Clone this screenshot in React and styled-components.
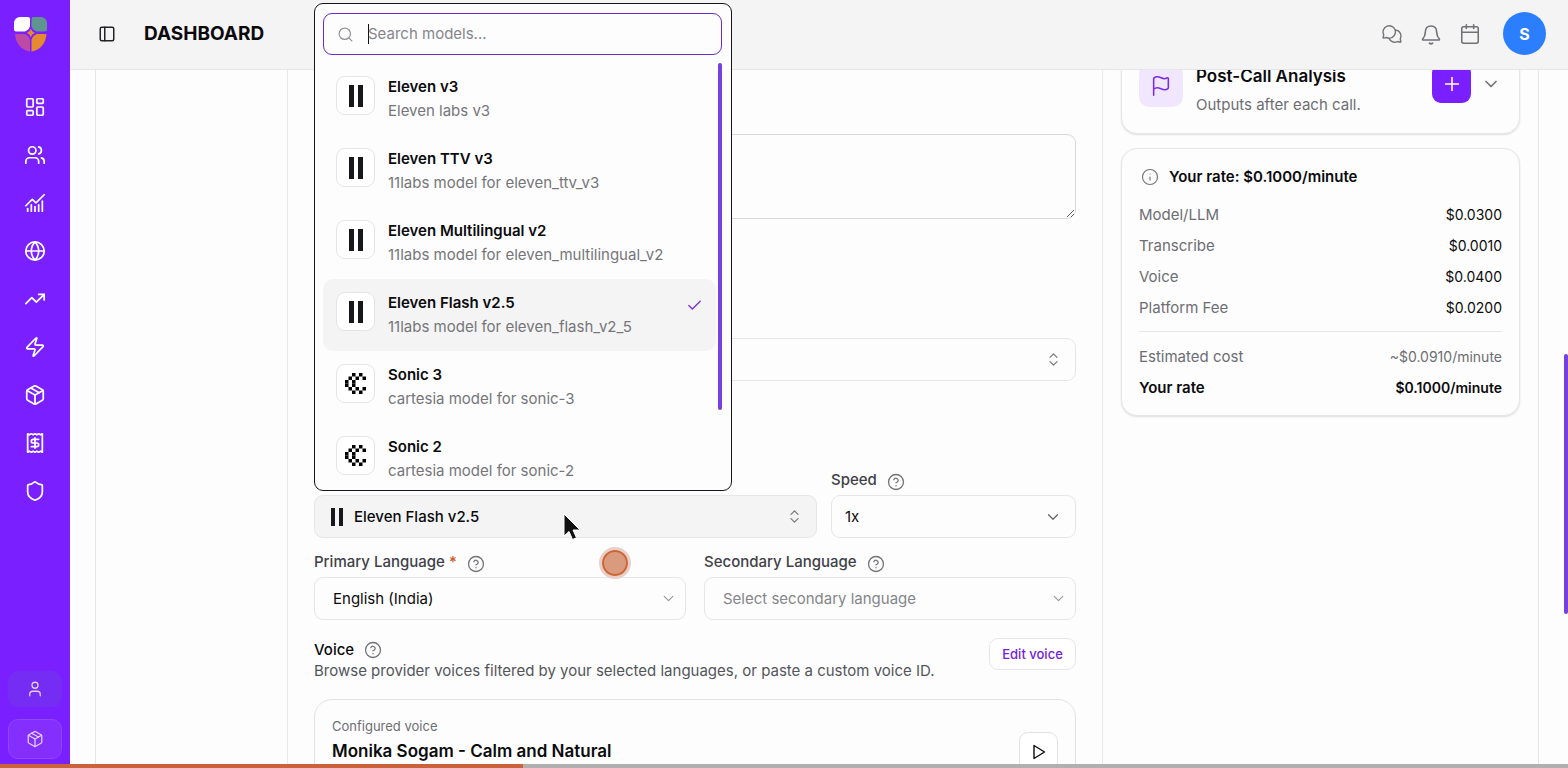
import { useState } from 'react'
import styled, { createGlobalStyle } from 'styled-components'
import {
  Calendar, ChartNoAxesCombined, Check, ChevronDown, ChevronsUpDown, CircleQuestionMark, Flag, Globe, Info,
  LayoutDashboard, Package, PanelLeft, Plus, Receipt, Search, Shield, TrendingUp, User, Users, Zap
} from 'lucide-react'
import { PiChatsCircle } from 'react-icons/pi'

const GlobalStyle = createGlobalStyle`
  * {
    box-sizing: border-box;
  }
  body {
    margin: 0;
    overflow: hidden;
    background: #fdfdfd;
    color: #0b0b0d;
    font: 15px/20px Inter, "Liberation Sans", sans-serif;
  }
  button, input, select, textarea {
    font: inherit;
    color: inherit;
  }
  button {
    padding: 0;
    cursor: pointer;
  }
`

const Shell = styled.div`
  display: flex;
  height: 100vh;
  overflow: hidden;
`

/* ---------- sidebar ---------- */
const Sidebar = styled.aside`
  display: flex;
  flex-direction: column;
  align-items: center;
  width: 70px;
  flex: none;
  padding: 17px 8px 9px;
  background: #7a1fff;
  color: #fff;
`
const LogoLink = styled.a`
  align-self: flex-start;
  height: 35px;
  padding-left: 6px;
  svg {
    display: block;
  }
`
const Nav = styled.nav`
  display: flex;
  flex-direction: column;
  flex: 1;
  margin-top: 31px;
`
const NavLink = styled.a`
  display: flex;
  align-items: center;
  justify-content: center;
  width: 48px;
  height: 48px;
  color: inherit;
`
const SideButton = styled.button`
  display: flex;
  align-items: center;
  justify-content: center;
  width: 54px;
  height: ${p => (p.$outlined ? 40 : 36)}px;
  margin-top: ${p => (p.$outlined ? 12 : 0)}px;
  border: 1px solid ${p => (p.$outlined ? '#9146ff' : 'transparent')};
  border-radius: 10px;
  background: ${p => (p.$outlined ? '#842fff' : '#752cf3')};
  color: #e3d0ff;
`

/* ---------- header ---------- */
const Main = styled.div`
  display: flex;
  flex-direction: column;
  flex: 1;
  min-width: 0;
`
const Header = styled.header`
  position: relative;
  z-index: 1;
  display: flex;
  align-items: center;
  flex: none;
  height: 70px;
  padding: 0 22px 2px 28px;
  border-bottom: 1px solid #e4e6e8;
  background: #f4f4f4;
`
const Title = styled.h1`
  flex: 1;
  margin: 0 0 0 28px;
  font-size: 19px;
  line-height: 28px;
  font-weight: 700;
`
const IconButton = styled.button`
  display: flex;
  align-items: center;
  border: 0;
  background: none;
  color: ${p => p.$color || '#707276'};
`
const Tools = styled.div`
  display: flex;
  align-items: center;
  gap: 17px;
`
const Avatar = styled.button`
  width: 43px;
  height: 43px;
  margin-left: 5px;
  border: 0;
  border-radius: 50%;
  background: #2b7fff;
  color: #fff;
  font-size: 16px;
  font-weight: 700;
`

/* ---------- page ---------- */
const Page = styled.main`
  display: flex;
  flex: 1;
  min-height: 0;
  padding-left: 25px;
`
const Panel = styled.div`
  display: grid;
  grid-template-columns: 191px minmax(0, 816fr) minmax(0, 435fr);
  flex: 1;
  min-width: 0;
  border: solid #e6e6e6;
  border-width: 0 1px;
`
const ScrollTrack = styled.div`
  width: 29px;
  padding: 284px 0 0 25px;
`
const ScrollThumb = styled.div`
  flex: none;
  width: 4px;
  height: ${p => p.$height}px;
  border-radius: 2px;
  background: #7840dc;
`
const Form = styled.form`
  padding: 64px 26px 0;
  border: solid #e9e9e9;
  border-width: 0 1px;
`
const Prompt = styled.textarea`
  display: block;
  width: 100%;
  height: 85px;
  margin-bottom: 119px;
  border: 1px solid #d9d9dc;
  border-radius: 9px;
  background: transparent;
`
const Trigger = styled.button`
  display: flex;
  align-items: center;
  gap: 11px;
  width: 100%;
  height: 43px;
  padding: 0 13px 0 16px;
  border: 1px solid #e6e6e8;
  border-radius: 9px;
  background: ${p => (p.$open ? '#f4f4f4' : '#fdfdfd')};
  font-weight: 500;
  svg:last-child {
    margin-left: auto;
    color: #77787c;
  }
`
const Row = styled.div`
  display: grid;
  grid-template-columns: ${p => p.$columns};
  align-items: end;
  gap: ${p => p.$gap}px;
  margin-top: ${p => p.$top}px;
`
const Anchor = styled.div`
  position: relative;
`
const LabelLine = styled.div`
  display: flex;
  align-items: flex-end;
  gap: 10px;
  height: 21px;
  margin-bottom: 4px;
  color: #3f4148;
  font-weight: 500;
  label {
    line-height: 20px;
    padding-bottom: 1px;
  }
  em {
    color: #d4552a;
    font-style: normal;
  }
`
const SelectBox = styled.div`
  display: grid;
  align-items: center;
  > * {
    grid-area: 1 / 1;
  }
  svg {
    justify-self: end;
    margin-right: ${p => p.$inset}px;
    color: ${p => p.$chevron};
    pointer-events: none;
  }
`
const Select = styled.select`
  appearance: none;
  width: 100%;
  height: 43px;
  padding: 0 ${p => p.$pad}px;
  border: 1px solid #e6e6e8;
  border-radius: 9px;
  background: transparent;
  color: ${p => (p.$muted ? '#85868a' : '#0b0b0d')};
`
const VoiceHead = styled.div`
  display: flex;
  align-items: flex-start;
  justify-content: space-between;
  margin: 18px 0;
`
const VoiceTitle = styled.h2`
  display: flex;
  align-items: center;
  gap: 10px;
  margin: 0;
  font-size: 15px;
  line-height: 23px;
  font-weight: 500;
`
const Description = styled.p`
  margin: 0;
  color: #53555b;
`
const EditButton = styled.button`
  width: 87px;
  height: 32px;
  border: 1px solid #e6e6e8;
  border-radius: 9px;
  background: #fff;
  color: #7422e0;
  font-size: 13px;
  font-weight: 500;
`
const VoiceCard = styled.section`
  display: flex;
  justify-content: space-between;
  padding: 16px 17px;
  border: 1px solid #e2e2e4;
  border-radius: 18px;
  small {
    display: block;
    color: #6d6e73;
    font-size: 13px;
  }
  strong {
    display: block;
    font-size: 17px;
    line-height: 30px;
    font-weight: 600;
  }
`
const PlayButton = styled.button`
  display: grid;
  place-items: center;
  width: 39px;
  height: 39px;
  margin-top: 16px;
  border: 1px solid #e2e2e4;
  border-radius: 9px;
  background: #fff;
`

/* ---------- model popover ---------- */
const Popover = styled.div`
  position: absolute;
  z-index: 2;
  left: 0;
  bottom: calc(100% + 4px);
  width: 418px;
  height: 488px;
  padding: 9px 9px 0 8px;
  overflow: hidden;
  border: 1px solid #15151a;
  border-radius: 9px;
  background: #fdfdfd;
`
const SearchBox = styled.label`
  display: flex;
  align-items: center;
  height: 42px;
  padding: 0 13px;
  border: 1px solid #6a2bc8;
  border-radius: 9px;
  color: #929296;
  input {
    flex: 1;
    min-width: 0;
    padding: 0;
    border: 0;
    outline: 0;
    background: none;
  }
  input::placeholder {
    color: #85868a;
    opacity: 1;
  }
`
const Caret = styled.span`
  width: 1px;
  height: 20px;
  margin: 0 -1px 0 14px;
  background: #111;
`
const ListArea = styled.div`
  display: flex;
  gap: 2px;
  margin-top: 8px;
`
const Options = styled.ul`
  flex: 1;
  margin: 0;
  padding: 0;
  list-style: none;
`
const Option = styled.button`
  display: flex;
  gap: 13px;
  width: 100%;
  height: 72px;
  padding: 13px;
  border: 0;
  border-radius: 10px;
  background: ${p => (p.$selected ? '#f4f4f4' : 'transparent')};
  text-align: left;
  > svg {
    margin: 5px 0 0 auto;
    color: #7a35dd;
  }
`
const OptionIcon = styled.span`
  display: grid;
  place-items: center;
  width: 39px;
  height: 39px;
  border: 1px solid #e4e4e6;
  border-radius: 9px;
  background: #fff;
`
const OptionText = styled.span`
  line-height: 24px;
  margin-top: -1px;
  color: #75767a;
  strong {
    display: block;
    color: #0b0b0d;
    font-weight: 600;
  }
`

/* ---------- right column ---------- */
const Aside = styled.div`
  display: flex;
  flex-direction: column;
  gap: 14px;
  margin-top: -25px;
  padding: 0 18px;
`
const Card = styled.section`
  padding: ${p => p.$padding};
  border: 1px solid #e6e6e8;
  border-radius: 16px;
  background: #fdfdfd;
  box-shadow: 0 1px 2px rgba(0, 0, 0, 0.12);
`
const AnalysisHead = styled.div`
  display: flex;
  align-items: flex-start;
  gap: 13px;
`
const FlagTile = styled.span`
  display: grid;
  place-items: center;
  flex: none;
  width: 44px;
  height: 43px;
  border-radius: 10px;
  background: #f0e7fe;
  color: #7a2be8;
`
const AnalysisText = styled.div`
  flex: 1;
  h2 {
    margin: 0 0 5px;
    font-size: 17px;
    line-height: 24px;
    font-weight: 600;
  }
  p {
    margin: 0;
    line-height: 24px;
    color: #6d6e73;
  }
`
const AnalysisActions = styled.div`
  display: flex;
  align-items: center;
  gap: 10px;
  padding-right: 1px;
`
const AddButton = styled.button`
  display: grid;
  place-items: center;
  width: 39px;
  height: 39px;
  border: 0;
  border-radius: 9px;
  background: #7a1fff;
  color: #fff;
`
const RateTitle = styled.h2`
  display: flex;
  align-items: center;
  gap: 10px;
  margin: 0 0 13px;
  padding-left: 2px;
  font-size: 15px;
  line-height: 20px;
  font-weight: 600;
  svg {
    color: #707276;
  }
`
const RateTable = styled.table`
  width: 100%;
  border-collapse: collapse;
  line-height: 20px;
`
const RateRow = styled.tr`
  border-bottom: ${p => (p.$last ? '1px solid #e6e6e8' : '0')};
  th, td {
    padding: ${p => (p.$first ? 15 : 5)}px 0 ${p => (p.$last ? 13 : 6)}px;
    font-weight: ${p => (p.$bold ? 600 : 400)};
  }
  th {
    text-align: left;
    font-size: 15px;
    color: ${p => (p.$bold ? '#0b0b0d' : '#6d6e73')};
  }
  td {
    text-align: right;
    font-size: 14px;
    color: ${p => (p.$first ? '#6d6e73' : '#0b0b0d')};
  }
`

/* ---------- things that float over the page ---------- */
const Pointer = styled.svg`
  position: fixed;
  z-index: 3;
  left: 563px;
  top: 513px;
`
const ClickDot = styled.div`
  position: fixed;
  z-index: 3;
  left: 599px;
  top: 547px;
  width: 32px;
  height: 32px;
  border: 3px solid #e8cfc8;
  border-radius: 50%;
  background: #d99a7e;
  box-shadow: inset 0 0 0 2px #cf6534;
`
const Progress = styled.div`
  position: fixed;
  z-index: 3;
  left: 0;
  right: 0;
  bottom: 0;
  height: 4px;
  background: #b0b0b0;
  div {
    height: 4px;
    background: #cb623b;
  }
`

const Logo = () => (
  <svg width="34" height="35" viewBox="0 0 34 35">
    <path d="M6 0h8a2 2 0 0 1 2 2v7q-1 4-5 5.500H2a2 2 0 0 1-2-2V6a6 6 0 0 1 6-6z" fill="#fff" />
    <path d="M19.500 0H27a6 6 0 0 1 6 6v6.500a2 2 0 0 1-2 2h-8.500Q18.500 13 17.500 9V2a2 2 0 0 1 2-2z" fill="#5f9490" />
    <path d="M1 17h9.500q4.500 1.500 5.500 6v11.500C7.500 33.500 1.500 26 1 17z" fill="#bd4ba6" />
    <path d="M32.500 17H23q-4.500 1.500-5.500 6v11.500C26 33.500 32 26 32.500 17z" fill="#e58a2e" />
    <path d="M16.800 11.800q.9 3.200 4 4.200-3.100 1-4 4.200-.9-3.200-4-4.200 3.100-1 4-4.200z" fill="#e58a2e" />
  </svg>
)

const Bell = () => (
  <svg width="22" height="22" viewBox="0 0 22 22" fill="none" stroke="currentColor" strokeWidth="1.600" strokeLinecap="round" strokeLinejoin="round">
    <path d="M11 3c-3.600 0-5.600 2.600-5.700 6.200-.1 4-1.300 5.300-2.500 6.500-.5.600-.2 1.300.6 1.300h15.200c.8 0 1.100-.7.600-1.300-1.200-1.200-2.400-2.500-2.500-6.500C16.600 5.600 14.600 3 11 3z" />
    <path d="M9.500 20.300q1.500 1 3 0" strokeWidth="1.800" />
  </svg>
)

const Bars = ({ width, height }) => (
  <svg width={width} height={height} viewBox={`0 0 ${width} ${height}`} fill="#17181c">
    <rect width={width / 2 - 2} height={height} />
    <rect x={width / 2 + 2} width={width / 2 - 2} height={height} />
  </svg>
)

const PIXELS = [
  '..X.X.',
  '.X.X.X',
  'X.X...',
  'X.X...',
  '.X.X.X',
  '..X.X.'
]

const Cartesia = () => (
  <svg width="21" height="21" viewBox="0 0 6 6">
    {PIXELS.map((line, y) => [...line].map((c, x) => (
      c === 'X' && <rect key={`${x}-${y}`} x={x} y={y} width="1" height="1" />
    )))}
  </svg>
)

const PlayIcon = () => (
  <svg width="14" height="16" viewBox="0 0 14 16" fill="none" stroke="currentColor" strokeWidth="1.400" strokeLinejoin="round">
    <path d="M2 1.500v13L12.500 8z" />
  </svg>
)

const Help = ({ about }) => (
  <IconButton type="button" aria-label={`Help: ${about}`}>
    <CircleQuestionMark size={18} strokeWidth={1.7} />
  </IconButton>
)

const links = [
  ['Dashboard', LayoutDashboard],
  ['Contacts', Users],
  ['Analytics', ChartNoAxesCombined],
  ['Web', Globe],
  ['Trends', TrendingUp],
  ['Automations', Zap],
  ['Products', Package],
  ['Billing', Receipt],
  ['Security', Shield]
]

const models = [
  { name: 'Eleven v3', description: 'Eleven labs v3' },
  { name: 'Eleven TTV v3', description: '11labs model for eleven_ttv_v3' },
  { name: 'Eleven Multilingual v2', description: '11labs model for eleven_multilingual_v2' },
  { name: 'Eleven Flash v2.5', description: '11labs model for eleven_flash_v2_5' },
  { name: 'Sonic 3', description: 'cartesia model for sonic-3', cartesia: true },
  { name: 'Sonic 2', description: 'cartesia model for sonic-2', cartesia: true }
]

const ModelPicker = () => {
  const [open, setOpen] = useState(true)
  const [selected, setSelected] = useState('Eleven Flash v2.5')
  const [query, setQuery] = useState('')

  const onSelect = (name) => {
    setSelected(name)
    setOpen(false)
  }

  const rows = models.filter(m => m.name.toLowerCase().includes(query.toLowerCase())).map(m => (
    <li key={m.name}>
      <Option type="button" $selected={m.name === selected} onClick={() => onSelect(m.name)}>
        <OptionIcon>{m.cartesia ? <Cartesia /> : <Bars width={14} height={22} />}</OptionIcon>
        <OptionText><strong>{m.name}</strong>{m.description}</OptionText>
        {m.name === selected && <Check size={17} />}
      </Option>
    </li>
  ))

  return (
    <Anchor>
      {open && (
        <Popover>
          <SearchBox>
            <Search size={17} strokeWidth={1.7} />
            <Caret />
            <input
              aria-label="Search models"
              placeholder="Search models..."
              value={query}
              onChange={e => setQuery(e.target.value)}
            />
          </SearchBox>
          <ListArea>
            <Options>{rows}</Options>
            <ScrollThumb $height={347} />
          </ListArea>
        </Popover>
      )}
      <Trigger type="button" $open={open} aria-expanded={open} onClick={() => setOpen(!open)}>
        <Bars width={12} height={18} />
        {selected}
        <ChevronsUpDown size={17} strokeWidth={1.7} />
      </Trigger>
    </Anchor>
  )
}

const VoiceForm = () => (
  <Form onSubmit={e => e.preventDefault()}>
    <Prompt aria-label="Prompt" />
    <Trigger type="button" aria-label="Choose model">
      <ChevronsUpDown size={17} strokeWidth={1.7} />
    </Trigger>
    <Row $columns="minmax(0, 1fr) 245px" $gap={14} $top={89}>
      <ModelPicker />
      <div>
        <LabelLine>
          <label htmlFor="speed">Speed</label>
          <Help about="speed" />
        </LabelLine>
        <SelectBox $inset={14} $chevron="#66676b">
          <Select id="speed" $pad={13}>
            <option>1x</option>
          </Select>
          <ChevronDown size={18} strokeWidth={1.7} />
        </SelectBox>
      </div>
    </Row>
    <Row $columns="repeat(2, minmax(0, 1fr))" $gap={18} $top={14}>
      <div>
        <LabelLine>
          <label htmlFor="primary">Primary Language <em>*</em></label>
          <Help about="primary language" />
        </LabelLine>
        <SelectBox $inset={9} $chevron="#98999d">
          <Select id="primary" $pad={18}>
            <option>English (India)</option>
          </Select>
          <ChevronDown size={17} strokeWidth={1.7} />
        </SelectBox>
      </div>
      <div>
        <LabelLine>
          <label htmlFor="secondary">Secondary Language</label>
          <Help about="secondary language" />
        </LabelLine>
        <SelectBox $inset={9} $chevron="#98999d">
          <Select id="secondary" $pad={18} $muted>
            <option>Select secondary language</option>
          </Select>
          <ChevronDown size={17} strokeWidth={1.7} />
        </SelectBox>
      </div>
    </Row>
    <VoiceHead>
      <div>
        <VoiceTitle>Voice <Help about="voice" /></VoiceTitle>
        <Description>Browse provider voices filtered by your selected languages, or paste a custom voice ID.</Description>
      </div>
      <EditButton type="button">Edit voice</EditButton>
    </VoiceHead>
    <VoiceCard>
      <div>
        <small>Configured voice</small>
        <strong>Monika Sogam - Calm and Natural</strong>
      </div>
      <PlayButton type="button" aria-label="Play sample"><PlayIcon /></PlayButton>
    </VoiceCard>
  </Form>
)

const SidePanel = () => (
  <Aside>
    <Card $padding="18px 17px 16px">
      <AnalysisHead>
        <FlagTile><Flag size={22} strokeWidth={1.7} /></FlagTile>
        <AnalysisText>
          <h2>Post-Call Analysis</h2>
          <p>Outputs after each call.</p>
        </AnalysisText>
        <AnalysisActions>
          <AddButton type="button" aria-label="Add output"><Plus size={22} strokeWidth={1.7} /></AddButton>
          <IconButton type="button" aria-label="Expand"><ChevronDown size={20} /></IconButton>
        </AnalysisActions>
      </AnalysisHead>
    </Card>
    <Card $padding="18px 17px 11px">
      <RateTitle><Info size={18} strokeWidth={1.5} />Your rate: $0.1000/minute</RateTitle>
      <RateTable>
        <tbody>
          <RateRow><th scope="row">Model/LLM</th><td>$0.0300</td></RateRow>
          <RateRow><th scope="row">Transcribe</th><td>$0.0010</td></RateRow>
          <RateRow><th scope="row">Voice</th><td>$0.0400</td></RateRow>
          <RateRow $last><th scope="row">Platform Fee</th><td>$0.0200</td></RateRow>
          <RateRow $first><th scope="row">Estimated cost</th><td>~$0.0910/minute</td></RateRow>
          <RateRow $bold><th scope="row">Your rate</th><td>$0.1000/minute</td></RateRow>
        </tbody>
      </RateTable>
    </Card>
  </Aside>
)

export default function App() {
  return (
    <Shell>
      <GlobalStyle />
      <Sidebar>
        <LogoLink href="#" aria-label="Home"><Logo /></LogoLink>
        <Nav>
          {links.map(([name, Icon]) => (
            <NavLink key={name} href="#" aria-label={name}><Icon size={22} strokeWidth={1.9} /></NavLink>
          ))}
        </Nav>
        <SideButton aria-label="Profile"><User size={18} strokeWidth={1.7} /></SideButton>
        <SideButton $outlined aria-label="Workspace"><Package size={18} strokeWidth={1.7} /></SideButton>
      </Sidebar>
      <Main>
        <Header>
          <IconButton $color="#222326" aria-label="Toggle sidebar"><PanelLeft size={18} /></IconButton>
          <Title>DASHBOARD</Title>
          <Tools>
            <IconButton aria-label="Messages"><PiChatsCircle size={22} /></IconButton>
            <IconButton aria-label="Notifications"><Bell /></IconButton>
            <IconButton aria-label="Calendar"><Calendar size={22} strokeWidth={1.7} /></IconButton>
            <Avatar>S</Avatar>
          </Tools>
        </Header>
        <Page>
          <Panel>
            <div />
            <VoiceForm />
            <SidePanel />
          </Panel>
          <ScrollTrack><ScrollThumb $height={260} /></ScrollTrack>
        </Page>
      </Main>
      <Pointer width="18" height="28" viewBox="0 0 18 28">
        <path d="M1 1v22l5-4.500 3.500 8 4-1.700-3.500-7.800h7z" fill="#111" stroke="#fff" strokeWidth="1" />
      </Pointer>
      <ClickDot />
      <Progress><div style={{ width: `${523 / 1568 * 100}%` }} /></Progress>
    </Shell>
  )
}
